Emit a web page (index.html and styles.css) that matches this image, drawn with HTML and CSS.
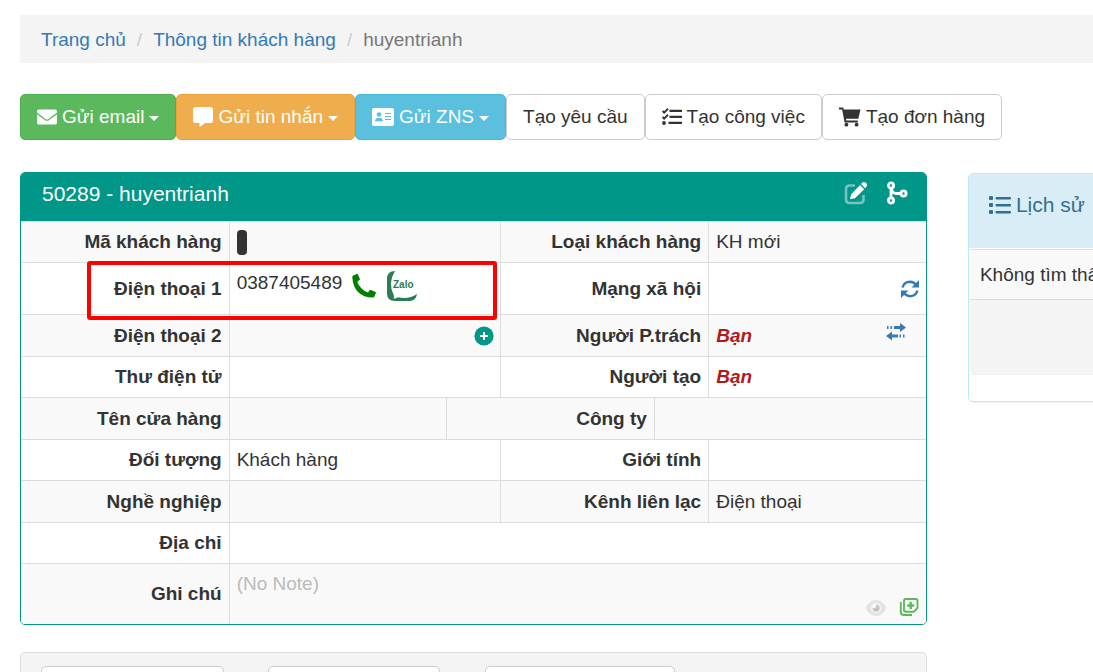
FILE: index.html
```html
<!DOCTYPE html>
<html lang="vi">
<head>
<meta charset="utf-8">
<title>Thông tin khách hàng</title>
<link rel="stylesheet" href="styles.css">
</head>
<body>
<div class="page">
  <nav class="breadcrumb" aria-label="Breadcrumb">
    <a href="#">Trang chủ</a><span class="sep">/</span><a href="#">Thông tin khách hàng</a><span class="sep">/</span><span class="current">huyentrianh</span>
  </nav>

  <div class="actions">
    <button type="button" class="btn btn-success">
      <svg width="20" height="16" viewBox="0 64 512 384" fill="currentColor"><path d="M502.300 190.800c3.900-3.100 9.700-.2 9.700 4.700V400c0 26.500-21.500 48-48 48H48c-26.500 0-48-21.500-48-48V195.600c0-5 5.700-7.800 9.700-4.700 22.400 17.400 52.100 39.500 154.100 113.600 21.100 15.400 56.700 47.800 92.200 47.600 35.700.3 72-32.800 92.300-47.600 102-74.100 131.600-96.300 154-113.700zM256 320c23.200.4 56.600-29.200 73.400-41.400 132.700-96.300 142.800-104.700 173.400-128.700 5.800-4.500 9.200-11.500 9.200-18.900v-19c0-26.500-21.500-48-48-48H48c-26.500 0-48 21.500-48 48v19c0 7.400 3.400 14.300 9.200 18.900 30.600 23.900 40.700 32.400 173.400 128.700 16.800 12.200 50.200 41.800 73.400 41.400z"/></svg>
      <span>Gửi email</span><span class="caret"></span>
    </button>
    <button type="button" class="btn btn-warning">
      <svg width="20" height="20" viewBox="0 0 20 20" fill="currentColor"><path d="M2.500 0h15Q20 0 20 2.500v11Q20 16 17.500 16H12l-4.600 3.600Q6.500 20 6.500 19v-3h-4Q0 16 0 13.500v-11Q0 0 2.500 0z"/></svg>
      <span>Gửi tin nhắn</span><span class="caret"></span>
    </button>
    <button type="button" class="btn btn-info">
      <svg width="22" height="18" viewBox="0 0 22 18"><rect width="22" height="18" rx="2" fill="currentColor"/><g fill="#5bc0de"><circle cx="7" cy="6.500" r="2.300"/><path d="M3 13.300c0-2 1.200-3.300 2.600-3.300h2.800c1.500 0 2.600 1.300 2.600 3.300z"/><path d="M13 5h6v1h-6zM13 8h6v1h-6zM13 11h6v1h-6z"/></g></svg>
      <span>Gửi ZNS</span><span class="caret"></span>
    </button>
    <button type="button" class="btn"><span>Tạo yêu cầu</span></button>
    <button type="button" class="btn">
      <svg width="20" height="18" viewBox="0 0 20 18" fill="#333"><path d="M7.500 1.700H20V4H7.500zM7.500 7.700H20V10H7.500zM6.500 13.700H20V16H6.500z"/><circle cx="2" cy="15" r="1.900"/><path d="M.5 3l1.600 1.600L6 .8M.5 9l1.600 1.600L6 6.800" fill="none" stroke="#333" stroke-width="1.900"/></svg>
      <span>Tạo công việc</span>
    </button>
    <button type="button" class="btn">
      <svg width="22" height="20" viewBox="0 0 22 20" fill="#333"><path d="M0 .5h4.200l.5 2H21.500L19.300 11.700H7l.3 1.700h11.500v2H5.600L3.100 2.500H0z"/><circle cx="7.400" cy="17.700" r="1.900"/><circle cx="17.600" cy="17.700" r="1.900"/></svg>
      <span>Tạo đơn hàng</span>
    </button>
  </div>

  <div class="columns">
    <main>
      <section class="card">
        <header class="card-head">
          <h1>50289 - huyentrianh</h1>
          <div class="tools">
            <button type="button" class="icon-btn" aria-label="Sửa">
              <svg width="24" height="24" viewBox="0 0 24 24"><path d="M11 4.500H5.500Q2 4.500 2 8v10.500Q2 22 5.500 22H16q3.500 0 3.500-3.500V14" fill="none" stroke="#fff" stroke-opacity=".45" stroke-width="2.600"/><path d="M7 13.500L16 4l4.200 4.200L11 17.300 6 18.200zM17 3l1.500-1.500q1.500-1.200 3 0l1 1q1.300 1.500 0 3L21.200 7.200z" fill="#fff"/></svg>
            </button>
            <button type="button" class="icon-btn" aria-label="Gộp">
              <svg width="22" height="24" viewBox="0 0 22 24" fill="none" stroke="#fff" stroke-width="2.800"><circle cx="5" cy="4.500" r="2.600"/><circle cx="5" cy="19.500" r="2.600"/><circle cx="17.500" cy="12.500" r="2.600"/><path d="M5 7v10M5.500 8q1 4.500 5 4.500H15"/></svg>
            </button>
          </div>
        </header>
        <table class="info">
          <colgroup><col class="c-label"><col class="c-wide"><col class="c-thin"><col class="c-mid"><col class="c-thin"><col class="c-wide"></colgroup>
          <tbody>
          <tr class="first"><th scope="row">Mã khách hàng</th><td colspan="2"><span class="masked"></span></td><th scope="row" colspan="2">Loại khách hàng</th><td>KH mới</td></tr>
          <tr class="tall"><th scope="row" class="marked">Điện thoại 1<span class="highlight"></span></th>
            <td colspan="2" class="top"><div class="phone"><span>0387405489</span>
              <a href="#" aria-label="Gọi"><svg width="24" height="24" viewBox="0 0 24 24" fill="#008000"><path d="M1.200 1.600L4.600 0Q5.600-.3 6 .5L7.800 4.800q.2.700-.3 1.100L5.300 7.900q2.900 7.500 10.600 10.500l1.900-2.300q.5-.5 1.200-.2l4.500 2q.7.400.4 1.200l-1.600 3.600q-.4.900-1.200.9Q1.600 23 .3 3.200.2 2 1.200 1.600z"/></svg></a>
              <a href="#" aria-label="Zalo"><svg class="zalo" width="32" height="32" viewBox="0 0 32 32"><path d="M9 1Q1 1 1 9v14.500Q1 31 9 31h14.500Q30 31 31 24q-8 5.500-19 3.300-2.500 1.500-4.500 1.200 1-1.800.2-3.500Q1.500 13 9 1z" fill="#2b7d54"/><text x="7" y="18">Zalo</text></svg></a></div></td>
            <th scope="row" colspan="2">Mạng xã hội</th>
            <td class="right"><button type="button" class="icon-btn" aria-label="Làm mới"><svg width="18" height="18" viewBox="0 0 18 18"><g fill="none" stroke="#337ab7" stroke-width="2.400"><path d="M1.500 7.500Q3 2 9 1.800q4 0 6.200 3.500M16.500 10.500Q15 16 9 16.200q-4 0-6.200-3.500"/></g><path d="M18 0v7.500h-7.500zM0 18v-7.500h7.500z" fill="#337ab7"/></svg></button></td></tr>
          <tr><th scope="row">Điện thoại 2</th>
            <td colspan="2" class="right add"><button type="button" class="icon-btn" aria-label="Thêm"><svg width="20" height="20" viewBox="0 0 20 20"><circle cx="10" cy="10" r="9.600" fill="#009688"/><path d="M10 6v8M6 10h8" stroke="#fff" stroke-width="2"/></svg></button></td>
            <th scope="row" colspan="2">Người P.trách</th>
            <td><div class="owner"><strong>Bạn</strong><button type="button" class="icon-btn" aria-label="Chuyển"><svg width="20" height="18" viewBox="0 0 20 18" fill="#337ab7"><path d="M1 3h1.500v3H1zM4.500 3H6v3H4.500zM8 3h6V0l6 4.500L14 9V6H8zM12 11.500H6v-3L0 13l6 4.500v-3h6zM13.500 11.500H15v3h-1.500zM17 11.500h1.500v3H17z"/></svg></button></div></td></tr>
          <tr><th scope="row">Thư điện tử</th><td colspan="2"></td><th scope="row" colspan="2">Người tạo</th><td><strong>Bạn</strong></td></tr>
          <tr><th scope="row">Tên cửa hàng</th><td></td><th scope="row" colspan="2">Công ty</th><td colspan="2"></td></tr>
          <tr><th scope="row">Đối tượng</th><td colspan="2">Khách hàng</td><th scope="row" colspan="2">Giới tính</th><td></td></tr>
          <tr><th scope="row">Nghề nghiệp</th><td colspan="2"></td><th scope="row" colspan="2">Kênh liên lạc</th><td>Điện thoại</td></tr>
          <tr><th scope="row">Địa chỉ</th><td colspan="5"></td></tr>
          <tr class="note"><th scope="row">Ghi chú</th>
            <td colspan="5"><div class="note-body"><span class="muted">(No Note)</span><div class="note-tools">
              <button type="button" class="icon-btn" aria-label="Xem"><svg width="22" height="18" viewBox="0 0 22 18"><path d="M.5 9Q4.500 1 11 1t10.500 8Q17.500 17 11 17T.5 9z" fill="#e3e3e3"/><circle cx="11" cy="9" r="5" fill="#f9f9f9"/><path d="M11 5.500A3.600 3.600 0 1 1 7.500 9q2 .8 3.100-.4T11 5.500z" fill="#c4c4c4"/></svg></button>
              <button type="button" class="icon-btn" aria-label="Thêm ghi chú"><svg width="20" height="20" viewBox="0 0 20 20" fill="none" stroke="#5cb85c" stroke-width="1.900"><path d="M6.500 2h10.200q1.800 0 1.800 1.800v7l-3.700 4H7q-2 0-2-2V3.500Q5 2 6.500 2zM1.800 5v10q0 3 3 3H13"/><path d="M11.700 5v7M8.200 8.500h7" stroke-width="2.400"/></svg></button>
            </div></div></td></tr>
          </tbody>
        </table>
      </section>

      <form class="filters">
        <input type="text" class="f1" aria-label="Từ ngày">
        <input type="text" class="f2" aria-label="Đến ngày">
        <input type="text" class="f3" aria-label="Nội dung">
      </form>
    </main>

    <aside class="history">
      <h2><svg width="22" height="18" viewBox="0 0 22 18" fill="#31708f"><rect width="4" height="4" rx="1"/><rect y="7" width="4" height="4" rx="1"/><rect y="14" width="4" height="4" rx="1"/><rect x="6.500" y="1" width="15.500" height="2.400" rx="1"/><rect x="6.500" y="8" width="15.500" height="2.400" rx="1"/><rect x="6.500" y="15" width="15.500" height="2.400" rx="1"/></svg>Lịch sử</h2>
      <div class="history-body">
        <p>Không tìm thấy</p>
        <div class="pager"></div>
      </div>
    </aside>
  </div>
</div>
</body>
</html>
```

FILE: styles.css
```css
* { box-sizing: border-box; }
html { overflow: hidden; }
body {
  margin: 0;
  background: #fff;
  color: #333;
  font: 19px/26px "Liberation Sans", Arial, sans-serif;
}
svg { display: block; flex: none; }
a { color: #337ab7; text-decoration: none; }
.page { padding: 15px 0 0 20px; }

.breadcrumb {
  padding: 12px 21px 10px;
  background: #f4f4f4;
  white-space: nowrap;
}
.breadcrumb .sep { padding: 0 11px; color: #ccc; }
.breadcrumb .current { color: #777; }

.actions { display: flex; margin: 31px 0 32px; }
.btn {
  display: flex;
  align-items: center;
  gap: 5px;
  height: 46px;
  padding: 0 16px;
  border: 1px solid #ccc;
  border-radius: 5px;
  background: #fff;
  color: #333;
  font: inherit;
  white-space: nowrap;
}
.btn-success { background: #5cb85c; border-color: #4cae4c; color: #fff; }
.btn-warning { background: #f0ad4e; border-color: #eea236; color: #fff; }
.btn-info { background: #5bc0de; border-color: #46b8da; color: #fff; }
.caret {
  margin-top: 3px;
  border: 5px solid transparent;
  border-top-color: currentColor;
  border-bottom: 0;
}

.columns {
  display: grid;
  grid-template-columns: minmax(0, 29fr) minmax(0, 4fr);
  gap: 41px;
  align-items: start;
}

.card {
  border: 1px solid #009688;
  border-radius: 5px;
  overflow: hidden;
}
.card-head {
  display: flex;
  justify-content: space-between;
  align-items: flex-start;
  height: 48px;
  padding: 8px 18px 0 21px;
  background: #009688;
  color: #fff;
}
.card-head h1 { margin: 0; font-size: 21px; font-weight: 400; }
.tools { display: flex; gap: 18px; }
.icon-btn { display: block; padding: 0; border: 0; background: none; }

.info { width: 100%; table-layout: fixed; border-collapse: collapse; }
.c-label { width: 23%; }
.c-wide { width: 24%; }
.c-thin { width: 6%; }
.c-mid { width: 17%; }
.info th, .info td {
  height: 41px;
  padding: 7px;
  border-top: 1px solid #ddd;
  border-left: 1px solid #ddd;
  text-align: left;
}
.info th { text-align: right; }
.info th:first-child { border-left: 0; }
.info tr:nth-child(odd) { background: #f9f9f9; }
.info tr:nth-child(odd) > * { height: 42px; }
.info tr.first > * { height: 41px; }
.info tr.tall > * { height: 52px; }
.info tr.note > * { height: 60px; }
.info strong { color: #b11a1a; font-style: italic; }
.info td.top { padding: 7px 7px 5px; vertical-align: top; }
.info .right .icon-btn { margin-left: auto; }
.info .add { padding-right: 6px; }
.masked {
  display: block;
  width: 10px;
  height: 25px;
  border-radius: 4px;
  background: #333;
}
.phone { display: flex; align-items: center; gap: 10px; }
.phone span { align-self: flex-start; }
.zalo text { fill: #2b7d54; font: 700 10px "Liberation Sans", Arial, sans-serif; }
.marked { position: relative; }
.highlight {
  position: absolute;
  z-index: 1;
  top: -2px;
  left: 66px;
  width: 410px;
  height: 59px;
  border: 4px solid #f00;
  border-radius: 3px;
}
.owner {
  display: flex;
  justify-content: space-between;
  align-items: flex-start;
  padding-right: 13px;
}
.info tr.note td { padding: 7px 7px 6px; }
.note-body { display: flex; justify-content: space-between; height: 46px; }
.muted { color: #bbb; }
.note-tools { display: flex; align-items: flex-end; gap: 12px; }

.filters {
  display: flex;
  height: 120px;
  margin-top: 27px;
  padding: 13px 20px;
  border: 1px solid #ddd;
  border-radius: 5px;
  background: #f4f4f4;
}
.filters input {
  height: 44px;
  padding: 0 12px;
  border: 1px solid #ccc;
  border-radius: 5px;
  background: #fff;
  font: inherit;
}
.f1 { width: 183px; margin-right: 44px; }
.f2 { width: 172px; margin-right: 45px; }
.f3 { width: 190px; }

.history {
  min-width: 440px;
  margin-top: 1px;
  padding-bottom: 27px;
  border: 1px solid #bce8f1;
  border-radius: 5px;
  box-shadow: 0 1px 1px rgba(0, 0, 0, .05);
}
.history h2 {
  display: flex;
  align-items: center;
  gap: 5px;
  height: 74px;
  margin: 0;
  padding: 0 20px 13px;
  background: #d9edf7;
  color: #31708f;
  font-size: 21px;
  font-weight: 400;
}
.history-body {
  margin: 1px 1px 0;
  border-top: 1px solid #ddd;
  box-shadow: 0 1px 1px rgba(0, 0, 0, .05);
}
.history p {
  margin: 0;
  padding: 12px 10px 11px;
  border-bottom: 1px solid #ddd;
  background: #f9f9f9;
}
.pager { height: 74px; border-radius: 0 0 4px 4px; background: #f4f4f4; }
```
